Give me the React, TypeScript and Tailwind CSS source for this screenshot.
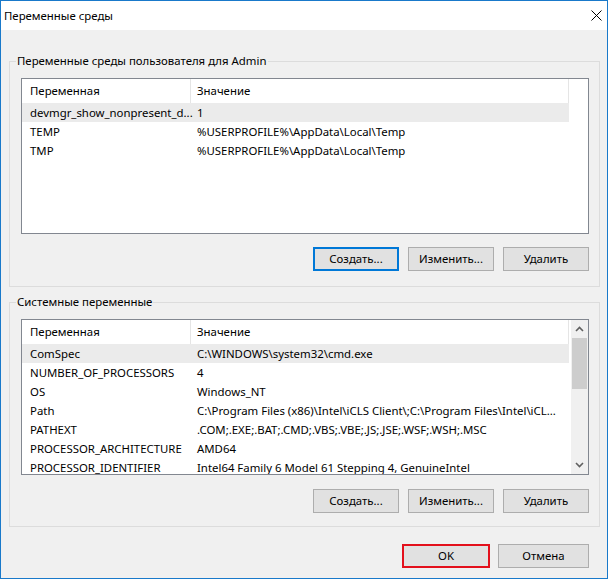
import { clsx } from "clsx";
import type { ReactNode } from "react";

type EnvVar = { name: string; value: string };

const userVars: EnvVar[] = [
  { name: "devmgr_show_nonpresent_d...", value: "1" },
  { name: "TEMP", value: "%USERPROFILE%\\AppData\\Local\\Temp" },
  { name: "TMP", value: "%USERPROFILE%\\AppData\\Local\\Temp" },
];

const systemVars: EnvVar[] = [
  { name: "ComSpec", value: "C:\\WINDOWS\\system32\\cmd.exe" },
  { name: "NUMBER_OF_PROCESSORS", value: "4" },
  { name: "OS", value: "Windows_NT" },
  {
    name: "Path",
    value:
      "C:\\Program Files (x86)\\Intel\\iCLS Client\\;C:\\Program Files\\Intel\\iCL...",
  },
  { name: "PATHEXT", value: ".COM;.EXE;.BAT;.CMD;.VBS;.VBE;.JS;.JSE;.WSF;.WSH;.MSC" },
  { name: "PROCESSOR_ARCHITECTURE", value: "AMD64" },
  { name: "PROCESSOR_IDENTIFIER", value: "Intel64 Family 6 Model 61 Stepping 4, GenuineIntel" },
];

const Chevron = ({ down }: { down?: boolean }) => (
  <svg width="9" height="6" viewBox="0 0 9 6" className={clsx(down && "rotate-180")}>
    <path d="M1 5 L4.5 1.5 L8 5" fill="none" stroke="#606060" strokeWidth="1.6" />
  </svg>
);

const Scrollbar = () => (
  <div className="flex w-[17px] shrink-0 flex-col bg-[#f0f0f0]">
    <div className="flex h-[18px] items-center justify-center">
      <Chevron />
    </div>
    <div className="mx-[1px] h-[51px] bg-[#cdcdcd]" />
    <div className="flex-1" />
    <div className="flex h-[18px] items-center justify-center">
      <Chevron down />
    </div>
  </div>
);

const ListView = ({ rows, scroll }: { rows: EnvVar[]; scroll?: boolean }) => (
  <div className="ml-[11px] flex h-[156px] w-[568px] overflow-hidden border border-[#828790] bg-white">
    <div className="min-w-0 flex-1">
      <div className="flex h-[24px]">
        <div className="flex w-[169px] items-center border-r border-[#e5e5e5] pl-[8px]">
          Переменная
        </div>
        <div className="flex w-[378px] items-center border-r border-[#e5e5e5] pl-[6px]">
          Значение
        </div>
      </div>
      {rows.map((row, index) => (
        <div
          key={row.name}
          className={clsx(
            "flex h-[19px] w-[547px] items-center whitespace-nowrap",
            index === 0 && "bg-[#ebebeb]"
          )}
        >
          <div className="w-[169px] shrink-0 pl-[8px]">{row.name}</div>
          <div className="pl-[6px]">{row.value}</div>
        </div>
      ))}
    </div>
    {scroll && <Scrollbar />}
  </div>
);

const Button = ({
  children,
  width,
  variant = "normal",
}: {
  children: ReactNode;
  width: string;
  variant?: "normal" | "default" | "marked";
}) => (
  <button
    className={clsx(
      "flex h-[24px] items-center justify-center bg-[#e1e1e1] text-black",
      width,
      variant === "normal" && "border border-[#adadad]",
      variant === "default" && "border-2 border-[#0078d7]",
      variant === "marked" && "border-2 border-[#e3101c]"
    )}
  >
    {children}
  </button>
);

const GroupBox = ({
  title,
  rows,
  scroll,
  className,
}: {
  title: string;
  rows: EnvVar[];
  scroll?: boolean;
  className?: string;
}) => (
  <fieldset className={clsx("ml-[8px] w-[591px] border border-[#dcdcdc]", className)}>
    <legend className="ml-[6px] px-[1px] leading-[16px]">{title}</legend>
    <div className="mt-[9px]">
      <ListView rows={rows} scroll={scroll} />
    </div>
    <div className="ml-[11px] flex w-[568px] justify-end gap-[9px]">
      <Button width="w-[86px]" variant={scroll ? "normal" : "default"}>
        Создать...
      </Button>
      <Button width="w-[86px]">Изменить...</Button>
      <Button width="w-[86px]">Удалить</Button>
    </div>
  </fieldset>
);

export default function App() {
  return (
    <div className="h-[580px] w-[609px] bg-white font-['Noto_Sans',sans-serif] text-[11.4px] leading-[16px] text-black">
      <div className="flex h-[579px] w-[608px] flex-col border border-[#1979ca] bg-[#f0f0f0]">
        <div className="flex h-[29px] shrink-0 items-center justify-between bg-white pl-[3px] pr-[5px]">
          <span>Переменные среды</span>
          <svg width="11" height="11" viewBox="0 0 11 11">
            <path d="M0.5 0.5 L10.5 10.5 M10.5 0.5 L0.5 10.5" stroke="#000" strokeWidth="1" />
          </svg>
        </div>

        <GroupBox
          title="Переменные среды пользователя для Admin"
          rows={userVars}
          className="mt-[23px] pb-[15px] [&>div:last-child]:mt-[13px]"
        />
        <GroupBox
          title="Системные переменные"
          rows={systemVars}
          scroll
          className="mt-[7px] pb-[13px] [&>div:last-child]:mt-[14px]"
        />

        <div className="mt-[17px] flex justify-end gap-[8px] pr-[18px]">
          <Button width="w-[88px]" variant="marked">
            OK
          </Button>
          <Button width="w-[91px]">Отмена</Button>
        </div>
      </div>
    </div>
  );
}
